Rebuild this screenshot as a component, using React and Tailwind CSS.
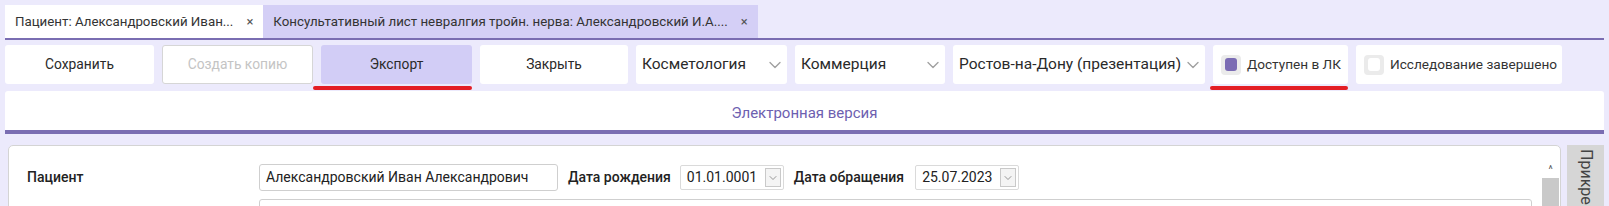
import { ChevronDown } from 'lucide-react';

const font = { fontFamily: 'Roboto, "Open Sans", sans-serif' };

function Tab({ title, active }) {
  return (
    <div
      className={`h-[33px] flex items-center pl-[10px] pr-[10px] text-[13.3px] text-[#333] ${
        active ? 'bg-white' : 'bg-[#d4cff6]'
      }`}
    >
      <span className="whitespace-nowrap">{title}</span>
      <span className="ml-[13px] text-[13px] text-[#555]">×</span>
    </div>
  );
}

function Button({ label, w, variant }) {
  const styles = {
    plain: 'bg-white text-[#2a2a2a]',
    disabled: 'bg-white text-[#c4c4c4] border border-[#d6d6d6]',
    active: 'bg-[#d2cdf6] text-[#2a2a2a]',
  };
  return (
    <button className={`h-[39px] rounded-[3px] text-[13.8px] ${styles[variant]} ${w}`}>
      {label}
    </button>
  );
}

function Select({ label, w }) {
  return (
    <div className={`h-[39px] rounded-[3px] bg-white flex items-center justify-between pl-[6px] pr-[2px] ${w}`}>
      <span className="text-[15.5px] text-[#2a2a2a] whitespace-nowrap">{label}</span>
      <ChevronDown className="w-[20px] h-[20px] text-[#a0a0a0]" strokeWidth={1.6} />
    </div>
  );
}

function Check({ label, checked, w }) {
  return (
    <div className={`h-[39px] rounded-[3px] bg-white flex items-center pl-[8px] ${w}`}>
      <div className="w-[20px] h-[20px] rounded-[4px] bg-[#ebebeb] flex items-center justify-center">
        <div className={`w-[12px] h-[13px] rounded-[3px] ${checked ? 'bg-[#7b6cb4]' : 'bg-white'}`} />
      </div>
      <span className="ml-[6px] text-[13.6px] text-[#333] whitespace-nowrap">{label}</span>
    </div>
  );
}

function DateBox({ value }) {
  return (
    <div className="h-[25px] w-[104px] border border-[#dadada] rounded-[2px] bg-white flex items-center justify-between pl-[6px] pr-[2px]">
      <span className="text-[14px] text-[#222]">{value}</span>
      <div className="w-[16px] h-[19px] border border-[#c9c9c9] bg-[#f4f4f4] flex items-center justify-center">
        <ChevronDown className="w-[12px] h-[12px] text-[#777]" strokeWidth={1.5} />
      </div>
    </div>
  );
}

export default function App() {
  return (
    <div className="w-[1609px] h-[206px] overflow-hidden bg-[#eceafc] relative" style={font}>
      {/* Tabs */}
      <div className="pt-[5px] px-[5px]">
        <div className="flex border-b-2 border-[#7a6db2]">
          <Tab title="Пациент: Александровский Иван..." active />
          <Tab title="Консультативный лист невралгия тройн. нерва: Александровский И.А...." />
        </div>
      </div>

      {/* Toolbar */}
      <div className="flex gap-[8px] px-[5px] mt-[5px] relative">
        <Button label="Сохранить" w="w-[149px]" variant="plain" />
        <Button label="Создать копию" w="w-[151px]" variant="disabled" />
        <Button label="Экспорт" w="w-[151px]" variant="active" />
        <Button label="Закрыть" w="w-[148px]" variant="plain" />
        <Select label="Косметология" w="w-[151px]" />
        <Select label="Коммерция" w="w-[150px]" />
        <Select label="Ростов-на-Дону (презентация)" w="w-[252px]" />
        <Check label="Доступен в ЛК" checked w="w-[135px]" />
        <Check label="Исследование завершено" w="w-[206px]" />
        <div className="absolute left-[313px] top-[41px] w-[159px] h-[4px] rounded-full bg-[#e31e24]" />
        <div className="absolute left-[1210px] top-[41px] w-[138px] h-[4px] rounded-full bg-[#e31e24]" />
      </div>

      {/* Electronic version header */}
      <div className="mx-[5px] mt-[7px] h-[43px] bg-white rounded-t-[3px] border-b-4 border-[#7a6db2] flex items-center justify-center pt-[5px]">
        <span className="text-[15px] text-[#6d60b0]">Электронная версия</span>
      </div>

      {/* Content */}
      <div className="flex mt-[11px] pl-[8px] pr-[5px]">
        <div className="flex-1 h-[80px] bg-white border border-[#d4d4d4] rounded-[5px] flex">
          <div className="flex-1 pl-[18px] pt-[18px]">
            <div className="flex items-center h-[27px]">
              <span className="w-[232px] text-[14px] font-medium text-[#222]">Пациент</span>
              <div className="w-[299px] h-[27px] border border-[#cfcfcf] rounded-[3px] flex items-center pl-[6px] text-[14px] text-[#222]">
                Александровский Иван Александрович
              </div>
              <span className="ml-[10px] mr-[9px] text-[14px] font-medium text-[#222]">Дата рождения</span>
              <DateBox value="01.01.0001" />
              <span className="ml-[10px] mr-[11px] text-[14px] font-medium text-[#222]">Дата обращения</span>
              <DateBox value="25.07.2023" />
            </div>
            <div className="flex items-start mt-[8px]">
              <span className="w-[232px] text-[14px] font-medium text-[#222] pt-[4px]">Шаблон</span>
              <div className="w-[1273px] h-[27px] border border-[#cfcfcf] rounded-[3px]" />
            </div>
          </div>
          <div className="w-[17px] mr-[1px] mt-[14px] flex flex-col">
            <div className="h-[18px] flex items-center justify-center text-[10px] text-[#555]">^</div>
            <div className="flex-1 bg-[#c9c9c9]" />
          </div>
        </div>
        <div className="ml-[6px] w-[37px] bg-[#d6d6d6] flex justify-center pt-[4px]">
          <span className="text-[16px] text-[#444] whitespace-nowrap [writing-mode:vertical-rl]">Прикрепления</span>
        </div>
      </div>
    </div>
  );
}
